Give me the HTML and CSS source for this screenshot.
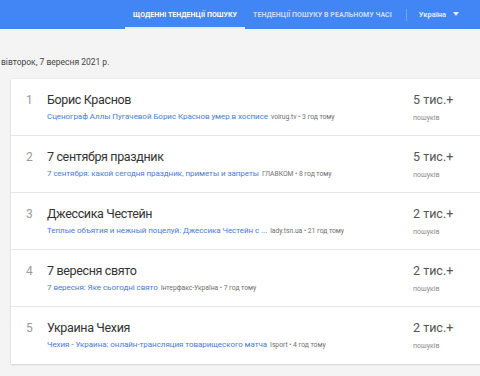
FILE: index.html
```html
<!DOCTYPE html>
<html lang="uk">
<head>
<meta charset="utf-8">
<link rel="stylesheet" href="styles.css">
</head>
<body>
<header class="topbar">
  <nav class="tabs">
    <a class="tab tab-active">ЩОДЕННІ ТЕНДЕНЦІЇ ПОШУКУ</a>
    <a class="tab">ТЕНДЕНЦІЇ ПОШУКУ В РЕАЛЬНОМУ ЧАСІ</a>
  </nav>
  <span class="divider"></span>
  <div class="geo">Україна <span class="caret"></span></div>
</header>
<main class="content">
  <div class="date">вівторок, 7 вересня 2021 р.</div>
  <section class="card">
    <div class="row">
      <div class="rank">1</div>
      <div class="main">
        <div class="title">Борис Краснов</div>
        <div class="sub"><a class="link">Сценограф Аллы Пугачевой Борис Краснов умер в хосписе</a><span class="src">volrug.tv • 3 год тому</span></div>
      </div>
      <div class="count"><div class="num">5 тис.+</div><div class="lbl">пошуків</div></div>
    </div>
    <div class="row">
      <div class="rank">2</div>
      <div class="main">
        <div class="title">7 сентября праздник</div>
        <div class="sub"><a class="link">7 сентября: какой сегодня праздник, приметы и запреты</a><span class="src">ГЛАВКОМ • 8 год тому</span></div>
      </div>
      <div class="count"><div class="num">5 тис.+</div><div class="lbl">пошуків</div></div>
    </div>
    <div class="row">
      <div class="rank">3</div>
      <div class="main">
        <div class="title">Джессика Честейн</div>
        <div class="sub"><a class="link">Теплые объятия и нежный поцелуй: Джессика Честейн с ...</a><span class="src">lady.tsn.ua • 21 год тому</span></div>
      </div>
      <div class="count"><div class="num">2 тис.+</div><div class="lbl">пошуків</div></div>
    </div>
    <div class="row">
      <div class="rank">4</div>
      <div class="main">
        <div class="title">7 вересня свято</div>
        <div class="sub"><a class="link">7 вересня: Яке сьогодні свято</a><span class="src">Інтерфакс-Україна • 7 год тому</span></div>
      </div>
      <div class="count"><div class="num">2 тис.+</div><div class="lbl">пошуків</div></div>
    </div>
    <div class="row">
      <div class="rank">5</div>
      <div class="main">
        <div class="title">Украина Чехия</div>
        <div class="sub"><a class="link">Чехия - Украина: онлайн-трансляция товарищеского матча</a><span class="src">Isport • 4 год тому</span></div>
      </div>
      <div class="count"><div class="num">2 тис.+</div><div class="lbl">пошуків</div></div>
    </div>
  </section>
</main>
</body>
</html>
```

FILE: styles.css
```css
html, body {
  margin: 0;
  padding: 0;
  background: #f4f4f4;
  font-family: Roboto, "Noto Sans", "Liberation Sans", sans-serif;
  overflow: hidden;
  width: 480px;
  height: 376px;
}
.topbar {
  height: 29px;
  background: #4285f4;
  display: flex;
  align-items: stretch;
  padding-left: 125px;
  box-sizing: border-box;
}
.tabs {
  display: flex;
  align-items: stretch;
}
.tab {
  display: flex;
  align-items: center;
  padding: 2px 8px 0;
  font-size: 7px;
  font-weight: 700;
  color: rgba(255, 255, 255, 0.72);
  letter-spacing: 0.05px;
  border-bottom: 2px solid transparent;
}
.tab-active {
  color: #fff;
  border-bottom-color: #e8ecf3;
}
.divider {
  width: 1px;
  background: rgba(255, 255, 255, 0.25);
  margin: 9px 12px 8px 6px;
}
.geo {
  display: flex;
  align-items: center;
  gap: 7px;
  font-size: 7.5px;
  font-weight: 700;
  color: rgba(255, 255, 255, 0.85);
}
.caret {
  width: 0;
  height: 0;
  border-left: 3px solid transparent;
  border-right: 3px solid transparent;
  border-top: 4px solid rgba(255, 255, 255, 0.85);
  margin-top: -1px;
}
.content {
  padding-top: 28px;
}
.date {
  font-size: 8.5px;
  color: #444;
  line-height: 11px;
  padding-left: 1px;
  margin-bottom: 11px;
}
.card {
  margin-left: 11px;
  margin-right: -12px;
  background: #fff;
  box-shadow: 0 0 1px rgba(0, 0, 0, 0.2), 0 1px 2px rgba(0, 0, 0, 0.1);
}
.row {
  display: flex;
  align-items: flex-start;
  height: 57px;
  box-sizing: border-box;
  padding-top: 13px;
  border-bottom: 1px solid #e6e6e6;
}
.row:last-child {
  border-bottom: none;
}
.rank {
  width: 36px;
  padding-left: 15px;
  box-sizing: border-box;
  font-size: 12px;
  line-height: 16px;
  color: #9a9a9a;
}
.main {
  flex: 1;
  min-width: 0;
}
.title {
  font-size: 12.5px;
  letter-spacing: -0.35px;
  line-height: 16px;
  color: #333;
}
.sub {
  margin-top: 3px;
  font-size: 8px;
  letter-spacing: -0.05px;
  line-height: 11px;
  white-space: nowrap;
}
.link {
  color: #4b7bd0;
}
.src {
  color: #6f6f6f;
  margin-left: 3px;
  font-size: 6.8px;
}
.count {
  width: 67px;
  flex: none;
  margin-right: 12px;
}
.num {
  font-size: 12.5px;
  line-height: 16px;
  color: #555;
}
.lbl {
  margin-top: 5px;
  font-size: 7px;
  line-height: 10px;
  color: #8a8a8a;
}
```
